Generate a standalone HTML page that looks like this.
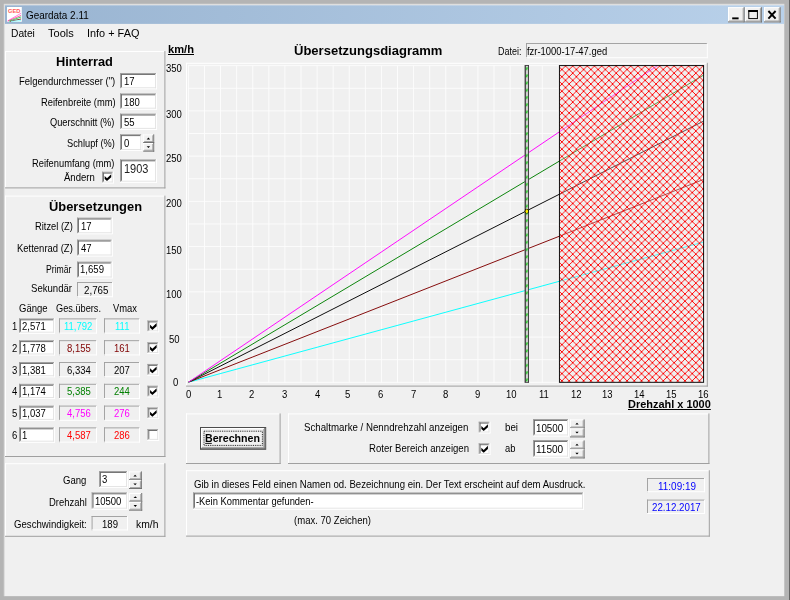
<!DOCTYPE html>
<html><head><meta charset="utf-8"><title>Geardata 2.11</title>
<style>
html,body{margin:0;padding:0;}
body{width:790px;height:600px;position:relative;overflow:hidden;background:#b4b4b4;font-family:"Liberation Sans",sans-serif;}
.tx{position:absolute;left:0;top:0;width:790px;height:600px;will-change:transform;opacity:0.999;}
.t{position:absolute;white-space:pre;line-height:1;color:#000;transform-origin:0 0;font-family:"Liberation Sans",sans-serif;}
</style></head><body>
<svg width="790" height="600" viewBox="0 0 790 600" style="position:absolute;left:0;top:0"><rect x="0.00" y="0.00" width="790.00" height="600.00" fill="#b4b4b4"/>
<rect x="789.00" y="0.00" width="1.00" height="600.00" fill="#646464"/>
<rect x="3.80" y="3.80" width="780.60" height="592.40" fill="#dedede"/>
<rect x="5.00" y="5.00" width="779.00" height="591.00" fill="#f0f0f0"/>
<defs><linearGradient id="tg" x1="0" x2="1" y1="0" y2="0"><stop offset="0" stop-color="#99b4d1"/><stop offset="1" stop-color="#b9d1ea"/></linearGradient><pattern id="dc" width="7.24" height="7.24" patternUnits="userSpaceOnUse" x="561.9" y="69.5"><g fill="#ff0000"><rect x="0.000" y="0.000" width="0.905" height="0.905"/><rect x="6.335" y="0.000" width="0.905" height="0.905"/><rect x="0.905" y="0.905" width="0.905" height="0.905"/><rect x="5.430" y="0.905" width="0.905" height="0.905"/><rect x="1.810" y="1.810" width="0.905" height="0.905"/><rect x="4.525" y="1.810" width="0.905" height="0.905"/><rect x="2.715" y="2.715" width="0.905" height="0.905"/><rect x="3.620" y="2.715" width="0.905" height="0.905"/><rect x="3.620" y="3.620" width="0.905" height="0.905"/><rect x="2.715" y="3.620" width="0.905" height="0.905"/><rect x="4.525" y="4.525" width="0.905" height="0.905"/><rect x="1.810" y="4.525" width="0.905" height="0.905"/><rect x="5.430" y="5.430" width="0.905" height="0.905"/><rect x="0.905" y="5.430" width="0.905" height="0.905"/><rect x="6.335" y="6.335" width="0.905" height="0.905"/><rect x="0.000" y="6.335" width="0.905" height="0.905"/></g></pattern><pattern id="gd" width="4" height="7.24" patternUnits="userSpaceOnUse" x="525.4" y="66"><path d="M0.8,4.0 L2.1,1.2" stroke="#00c800" stroke-width="1.3" fill="none"/></pattern><clipPath id="plot"><rect x="188" y="65.6" width="516" height="317"/></clipPath></defs>
<rect x="5.00" y="5.30" width="779.00" height="18.60" fill="url(#tg)"/>
<rect x="7.00" y="7.00" width="14.80" height="14.80" fill="#fff"/>
<text x="8" y="13.2" font-family="Liberation Sans" font-weight="bold" font-size="6.2" fill="#ff5a5a" textLength="12.4" lengthAdjust="spacingAndGlyphs">GED</text>
<path d="M7.5,21 L21,13.3" stroke="#ff80e0" stroke-width="1.0"/><path d="M8,21 L21,15.5" stroke="#ff3090" stroke-width="0.8"/><path d="M9,21.2 L21,17" stroke="#40e060" stroke-width="1.0"/><path d="M10,21.3 L21,19" stroke="#703030" stroke-width="0.9"/><path d="M11,21.4 L21,20.6" stroke="#80ffff" stroke-width="0.9"/>
<rect x="728.00" y="7.20" width="16.60" height="15.20" fill="#f0f0f0"/>
<rect x="728.00" y="7.20" width="15.65" height="0.95" fill="#ffffff"/>
<rect x="728.00" y="7.20" width="0.95" height="14.25" fill="#ffffff"/>
<rect x="728.00" y="21.45" width="16.60" height="0.95" fill="#696969"/>
<rect x="743.65" y="7.20" width="0.95" height="15.20" fill="#696969"/>
<rect x="728.95" y="20.50" width="14.70" height="0.95" fill="#a0a0a0"/>
<rect x="742.70" y="8.15" width="0.95" height="13.30" fill="#a0a0a0"/>
<rect x="732.20" y="17.40" width="6.40" height="1.90" fill="#000"/>
<rect x="745.20" y="7.20" width="16.60" height="15.20" fill="#f0f0f0"/>
<rect x="745.20" y="7.20" width="15.65" height="0.95" fill="#ffffff"/>
<rect x="745.20" y="7.20" width="0.95" height="14.25" fill="#ffffff"/>
<rect x="745.20" y="21.45" width="16.60" height="0.95" fill="#696969"/>
<rect x="760.85" y="7.20" width="0.95" height="15.20" fill="#696969"/>
<rect x="746.15" y="20.50" width="14.70" height="0.95" fill="#a0a0a0"/>
<rect x="759.90" y="8.15" width="0.95" height="13.30" fill="#a0a0a0"/>
<rect x="748.80" y="10.60" width="8.6" height="8" fill="none" stroke="#000" stroke-width="0.95"/>
<rect x="748.30" y="10.10" width="9.60" height="1.90" fill="#000"/>
<rect x="764.00" y="7.20" width="16.60" height="15.20" fill="#f0f0f0"/>
<rect x="764.00" y="7.20" width="15.65" height="0.95" fill="#ffffff"/>
<rect x="764.00" y="7.20" width="0.95" height="14.25" fill="#ffffff"/>
<rect x="764.00" y="21.45" width="16.60" height="0.95" fill="#696969"/>
<rect x="779.65" y="7.20" width="0.95" height="15.20" fill="#696969"/>
<rect x="764.95" y="20.50" width="14.70" height="0.95" fill="#a0a0a0"/>
<rect x="778.70" y="8.15" width="0.95" height="13.30" fill="#a0a0a0"/>
<path d="M768.40,11 L775.60,18.6 M775.60,11 L768.40,18.6" stroke="#000" stroke-width="1.9"/>
<rect x="5.00" y="51.00" width="160.40" height="1.00" fill="#ffffff"/>
<rect x="5.00" y="51.00" width="1.00" height="137.40" fill="#ffffff"/>
<rect x="5.00" y="187.40" width="160.40" height="1.00" fill="#a0a0a0"/>
<rect x="164.40" y="51.00" width="1.00" height="137.40" fill="#a0a0a0"/>
<rect x="5.00" y="195.60" width="160.40" height="1.00" fill="#ffffff"/>
<rect x="5.00" y="195.60" width="1.00" height="261.40" fill="#ffffff"/>
<rect x="5.00" y="456.00" width="160.40" height="1.00" fill="#a0a0a0"/>
<rect x="164.40" y="195.60" width="1.00" height="261.40" fill="#a0a0a0"/>
<rect x="5.00" y="463.20" width="160.40" height="1.00" fill="#ffffff"/>
<rect x="5.00" y="463.20" width="1.00" height="73.60" fill="#ffffff"/>
<rect x="5.00" y="535.80" width="160.40" height="1.00" fill="#a0a0a0"/>
<rect x="164.40" y="463.20" width="1.00" height="73.60" fill="#a0a0a0"/>
<rect x="120.00" y="73.00" width="37.00" height="16.20" fill="#fff"/>
<rect x="120.00" y="88.25" width="37.00" height="0.95" fill="#ffffff"/>
<rect x="156.05" y="73.00" width="0.95" height="16.20" fill="#ffffff"/>
<rect x="120.95" y="87.30" width="35.10" height="0.95" fill="#e3e3e3"/>
<rect x="155.10" y="73.95" width="0.95" height="14.30" fill="#e3e3e3"/>
<rect x="120.00" y="73.00" width="36.05" height="0.95" fill="#a0a0a0"/>
<rect x="120.00" y="73.00" width="0.95" height="15.25" fill="#a0a0a0"/>
<rect x="120.95" y="73.95" width="34.15" height="0.95" fill="#696969"/>
<rect x="120.95" y="73.95" width="0.95" height="13.35" fill="#696969"/>
<rect x="120.00" y="93.40" width="37.00" height="16.20" fill="#fff"/>
<rect x="120.00" y="108.65" width="37.00" height="0.95" fill="#ffffff"/>
<rect x="156.05" y="93.40" width="0.95" height="16.20" fill="#ffffff"/>
<rect x="120.95" y="107.70" width="35.10" height="0.95" fill="#e3e3e3"/>
<rect x="155.10" y="94.35" width="0.95" height="14.30" fill="#e3e3e3"/>
<rect x="120.00" y="93.40" width="36.05" height="0.95" fill="#a0a0a0"/>
<rect x="120.00" y="93.40" width="0.95" height="15.25" fill="#a0a0a0"/>
<rect x="120.95" y="94.35" width="34.15" height="0.95" fill="#696969"/>
<rect x="120.95" y="94.35" width="0.95" height="13.35" fill="#696969"/>
<rect x="120.00" y="113.60" width="37.00" height="16.20" fill="#fff"/>
<rect x="120.00" y="128.85" width="37.00" height="0.95" fill="#ffffff"/>
<rect x="156.05" y="113.60" width="0.95" height="16.20" fill="#ffffff"/>
<rect x="120.95" y="127.90" width="35.10" height="0.95" fill="#e3e3e3"/>
<rect x="155.10" y="114.55" width="0.95" height="14.30" fill="#e3e3e3"/>
<rect x="120.00" y="113.60" width="36.05" height="0.95" fill="#a0a0a0"/>
<rect x="120.00" y="113.60" width="0.95" height="15.25" fill="#a0a0a0"/>
<rect x="120.95" y="114.55" width="34.15" height="0.95" fill="#696969"/>
<rect x="120.95" y="114.55" width="0.95" height="13.35" fill="#696969"/>
<rect x="120.00" y="134.20" width="22.20" height="16.80" fill="#fff"/>
<rect x="120.00" y="150.05" width="22.20" height="0.95" fill="#ffffff"/>
<rect x="141.25" y="134.20" width="0.95" height="16.80" fill="#ffffff"/>
<rect x="120.95" y="149.10" width="20.30" height="0.95" fill="#e3e3e3"/>
<rect x="140.30" y="135.15" width="0.95" height="14.90" fill="#e3e3e3"/>
<rect x="120.00" y="134.20" width="21.25" height="0.95" fill="#a0a0a0"/>
<rect x="120.00" y="134.20" width="0.95" height="15.85" fill="#a0a0a0"/>
<rect x="120.95" y="135.15" width="19.35" height="0.95" fill="#696969"/>
<rect x="120.95" y="135.15" width="0.95" height="13.95" fill="#696969"/>
<rect x="143.20" y="134.40" width="11.00" height="8.60" fill="#f0f0f0"/>
<rect x="143.20" y="134.40" width="10.05" height="0.95" fill="#ffffff"/>
<rect x="143.20" y="134.40" width="0.95" height="7.65" fill="#ffffff"/>
<rect x="143.20" y="142.05" width="11.00" height="0.95" fill="#696969"/>
<rect x="153.25" y="134.40" width="0.95" height="8.60" fill="#696969"/>
<rect x="144.15" y="141.10" width="9.10" height="0.95" fill="#a0a0a0"/>
<rect x="152.30" y="135.35" width="0.95" height="6.70" fill="#a0a0a0"/>
<rect x="143.20" y="143.00" width="11.00" height="8.60" fill="#f0f0f0"/>
<rect x="143.20" y="143.00" width="10.05" height="0.95" fill="#ffffff"/>
<rect x="143.20" y="143.00" width="0.95" height="7.65" fill="#ffffff"/>
<rect x="143.20" y="150.65" width="11.00" height="0.95" fill="#696969"/>
<rect x="153.25" y="143.00" width="0.95" height="8.60" fill="#696969"/>
<rect x="144.15" y="149.70" width="9.10" height="0.95" fill="#a0a0a0"/>
<rect x="152.30" y="143.95" width="0.95" height="6.70" fill="#a0a0a0"/>
<path d="M146.70,139.40 L148.40,137.60 L150.10,139.40Z" fill="#000"/>
<path d="M146.70,146.20 L148.40,148.00 L150.10,146.20Z" fill="#000"/>
<rect x="120.00" y="159.40" width="37.00" height="23.20" fill="#fff"/>
<rect x="120.00" y="181.65" width="37.00" height="0.95" fill="#ffffff"/>
<rect x="156.05" y="159.40" width="0.95" height="23.20" fill="#ffffff"/>
<rect x="120.95" y="180.70" width="35.10" height="0.95" fill="#e3e3e3"/>
<rect x="155.10" y="160.35" width="0.95" height="21.30" fill="#e3e3e3"/>
<rect x="120.00" y="159.40" width="36.05" height="0.95" fill="#a0a0a0"/>
<rect x="120.00" y="159.40" width="0.95" height="22.25" fill="#a0a0a0"/>
<rect x="120.95" y="160.35" width="34.15" height="0.95" fill="#696969"/>
<rect x="120.95" y="160.35" width="0.95" height="20.35" fill="#696969"/>
<rect x="102.00" y="171.70" width="11.70" height="11.70" fill="#fff"/>
<rect x="102.00" y="182.45" width="11.70" height="0.95" fill="#ffffff"/>
<rect x="112.75" y="171.70" width="0.95" height="11.70" fill="#ffffff"/>
<rect x="102.95" y="181.50" width="9.80" height="0.95" fill="#e3e3e3"/>
<rect x="111.80" y="172.65" width="0.95" height="9.80" fill="#e3e3e3"/>
<rect x="102.00" y="171.70" width="10.75" height="0.95" fill="#a0a0a0"/>
<rect x="102.00" y="171.70" width="0.95" height="10.75" fill="#a0a0a0"/>
<rect x="102.95" y="172.65" width="8.85" height="0.95" fill="#696969"/>
<rect x="102.95" y="172.65" width="0.95" height="8.85" fill="#696969"/>
<polygon points="104.66,176.07 107.00,178.32 111.23,174.27 111.23,177.33 107.00,181.11 104.66,179.04" fill="#000"/>
<rect x="77.00" y="217.60" width="35.60" height="16.60" fill="#fff"/>
<rect x="77.00" y="233.25" width="35.60" height="0.95" fill="#ffffff"/>
<rect x="111.65" y="217.60" width="0.95" height="16.60" fill="#ffffff"/>
<rect x="77.95" y="232.30" width="33.70" height="0.95" fill="#e3e3e3"/>
<rect x="110.70" y="218.55" width="0.95" height="14.70" fill="#e3e3e3"/>
<rect x="77.00" y="217.60" width="34.65" height="0.95" fill="#a0a0a0"/>
<rect x="77.00" y="217.60" width="0.95" height="15.65" fill="#a0a0a0"/>
<rect x="77.95" y="218.55" width="32.75" height="0.95" fill="#696969"/>
<rect x="77.95" y="218.55" width="0.95" height="13.75" fill="#696969"/>
<rect x="77.00" y="239.60" width="35.60" height="16.80" fill="#fff"/>
<rect x="77.00" y="255.45" width="35.60" height="0.95" fill="#ffffff"/>
<rect x="111.65" y="239.60" width="0.95" height="16.80" fill="#ffffff"/>
<rect x="77.95" y="254.50" width="33.70" height="0.95" fill="#e3e3e3"/>
<rect x="110.70" y="240.55" width="0.95" height="14.90" fill="#e3e3e3"/>
<rect x="77.00" y="239.60" width="34.65" height="0.95" fill="#a0a0a0"/>
<rect x="77.00" y="239.60" width="0.95" height="15.85" fill="#a0a0a0"/>
<rect x="77.95" y="240.55" width="32.75" height="0.95" fill="#696969"/>
<rect x="77.95" y="240.55" width="0.95" height="13.95" fill="#696969"/>
<rect x="77.00" y="261.60" width="35.60" height="16.80" fill="#fff"/>
<rect x="77.00" y="277.45" width="35.60" height="0.95" fill="#ffffff"/>
<rect x="111.65" y="261.60" width="0.95" height="16.80" fill="#ffffff"/>
<rect x="77.95" y="276.50" width="33.70" height="0.95" fill="#e3e3e3"/>
<rect x="110.70" y="262.55" width="0.95" height="14.90" fill="#e3e3e3"/>
<rect x="77.00" y="261.60" width="34.65" height="0.95" fill="#a0a0a0"/>
<rect x="77.00" y="261.60" width="0.95" height="15.85" fill="#a0a0a0"/>
<rect x="77.95" y="262.55" width="32.75" height="0.95" fill="#696969"/>
<rect x="77.95" y="262.55" width="0.95" height="13.95" fill="#696969"/>
<rect x="77.00" y="282.00" width="36.00" height="0.95" fill="#a0a0a0"/>
<rect x="77.00" y="282.00" width="0.95" height="15.20" fill="#a0a0a0"/>
<rect x="77.00" y="296.25" width="36.00" height="0.95" fill="#ffffff"/>
<rect x="112.05" y="282.00" width="0.95" height="15.20" fill="#ffffff"/>
<rect x="19.00" y="318.40" width="36.00" height="15.20" fill="#fff"/>
<rect x="19.00" y="332.65" width="36.00" height="0.95" fill="#ffffff"/>
<rect x="54.05" y="318.40" width="0.95" height="15.20" fill="#ffffff"/>
<rect x="19.95" y="331.70" width="34.10" height="0.95" fill="#e3e3e3"/>
<rect x="53.10" y="319.35" width="0.95" height="13.30" fill="#e3e3e3"/>
<rect x="19.00" y="318.40" width="35.05" height="0.95" fill="#a0a0a0"/>
<rect x="19.00" y="318.40" width="0.95" height="14.25" fill="#a0a0a0"/>
<rect x="19.95" y="319.35" width="33.15" height="0.95" fill="#696969"/>
<rect x="19.95" y="319.35" width="0.95" height="12.35" fill="#696969"/>
<rect x="59.00" y="318.40" width="38.00" height="0.95" fill="#a0a0a0"/>
<rect x="59.00" y="318.40" width="0.95" height="15.20" fill="#a0a0a0"/>
<rect x="59.00" y="332.65" width="38.00" height="0.95" fill="#ffffff"/>
<rect x="96.05" y="318.40" width="0.95" height="15.20" fill="#ffffff"/>
<rect x="104.00" y="318.40" width="36.00" height="0.95" fill="#a0a0a0"/>
<rect x="104.00" y="318.40" width="0.95" height="15.20" fill="#a0a0a0"/>
<rect x="104.00" y="332.65" width="36.00" height="0.95" fill="#ffffff"/>
<rect x="139.05" y="318.40" width="0.95" height="15.20" fill="#ffffff"/>
<rect x="147.40" y="320.50" width="11.70" height="11.70" fill="#fff"/>
<rect x="147.40" y="331.25" width="11.70" height="0.95" fill="#ffffff"/>
<rect x="158.15" y="320.50" width="0.95" height="11.70" fill="#ffffff"/>
<rect x="148.35" y="330.30" width="9.80" height="0.95" fill="#e3e3e3"/>
<rect x="157.20" y="321.45" width="0.95" height="9.80" fill="#e3e3e3"/>
<rect x="147.40" y="320.50" width="10.75" height="0.95" fill="#a0a0a0"/>
<rect x="147.40" y="320.50" width="0.95" height="10.75" fill="#a0a0a0"/>
<rect x="148.35" y="321.45" width="8.85" height="0.95" fill="#696969"/>
<rect x="148.35" y="321.45" width="0.95" height="8.85" fill="#696969"/>
<polygon points="150.06,324.87 152.40,327.12 156.63,323.07 156.63,326.13 152.40,329.91 150.06,327.84" fill="#000"/>
<rect x="19.00" y="340.20" width="36.00" height="15.20" fill="#fff"/>
<rect x="19.00" y="354.45" width="36.00" height="0.95" fill="#ffffff"/>
<rect x="54.05" y="340.20" width="0.95" height="15.20" fill="#ffffff"/>
<rect x="19.95" y="353.50" width="34.10" height="0.95" fill="#e3e3e3"/>
<rect x="53.10" y="341.15" width="0.95" height="13.30" fill="#e3e3e3"/>
<rect x="19.00" y="340.20" width="35.05" height="0.95" fill="#a0a0a0"/>
<rect x="19.00" y="340.20" width="0.95" height="14.25" fill="#a0a0a0"/>
<rect x="19.95" y="341.15" width="33.15" height="0.95" fill="#696969"/>
<rect x="19.95" y="341.15" width="0.95" height="12.35" fill="#696969"/>
<rect x="59.00" y="340.20" width="38.00" height="0.95" fill="#a0a0a0"/>
<rect x="59.00" y="340.20" width="0.95" height="15.20" fill="#a0a0a0"/>
<rect x="59.00" y="354.45" width="38.00" height="0.95" fill="#ffffff"/>
<rect x="96.05" y="340.20" width="0.95" height="15.20" fill="#ffffff"/>
<rect x="104.00" y="340.20" width="36.00" height="0.95" fill="#a0a0a0"/>
<rect x="104.00" y="340.20" width="0.95" height="15.20" fill="#a0a0a0"/>
<rect x="104.00" y="354.45" width="36.00" height="0.95" fill="#ffffff"/>
<rect x="139.05" y="340.20" width="0.95" height="15.20" fill="#ffffff"/>
<rect x="147.40" y="342.22" width="11.70" height="11.70" fill="#fff"/>
<rect x="147.40" y="352.97" width="11.70" height="0.95" fill="#ffffff"/>
<rect x="158.15" y="342.22" width="0.95" height="11.70" fill="#ffffff"/>
<rect x="148.35" y="352.02" width="9.80" height="0.95" fill="#e3e3e3"/>
<rect x="157.20" y="343.17" width="0.95" height="9.80" fill="#e3e3e3"/>
<rect x="147.40" y="342.22" width="10.75" height="0.95" fill="#a0a0a0"/>
<rect x="147.40" y="342.22" width="0.95" height="10.75" fill="#a0a0a0"/>
<rect x="148.35" y="343.17" width="8.85" height="0.95" fill="#696969"/>
<rect x="148.35" y="343.17" width="0.95" height="8.85" fill="#696969"/>
<polygon points="150.06,346.59 152.40,348.84 156.63,344.79 156.63,347.85 152.40,351.63 150.06,349.56" fill="#000"/>
<rect x="19.00" y="362.00" width="36.00" height="15.20" fill="#fff"/>
<rect x="19.00" y="376.25" width="36.00" height="0.95" fill="#ffffff"/>
<rect x="54.05" y="362.00" width="0.95" height="15.20" fill="#ffffff"/>
<rect x="19.95" y="375.30" width="34.10" height="0.95" fill="#e3e3e3"/>
<rect x="53.10" y="362.95" width="0.95" height="13.30" fill="#e3e3e3"/>
<rect x="19.00" y="362.00" width="35.05" height="0.95" fill="#a0a0a0"/>
<rect x="19.00" y="362.00" width="0.95" height="14.25" fill="#a0a0a0"/>
<rect x="19.95" y="362.95" width="33.15" height="0.95" fill="#696969"/>
<rect x="19.95" y="362.95" width="0.95" height="12.35" fill="#696969"/>
<rect x="59.00" y="362.00" width="38.00" height="0.95" fill="#a0a0a0"/>
<rect x="59.00" y="362.00" width="0.95" height="15.20" fill="#a0a0a0"/>
<rect x="59.00" y="376.25" width="38.00" height="0.95" fill="#ffffff"/>
<rect x="96.05" y="362.00" width="0.95" height="15.20" fill="#ffffff"/>
<rect x="104.00" y="362.00" width="36.00" height="0.95" fill="#a0a0a0"/>
<rect x="104.00" y="362.00" width="0.95" height="15.20" fill="#a0a0a0"/>
<rect x="104.00" y="376.25" width="36.00" height="0.95" fill="#ffffff"/>
<rect x="139.05" y="362.00" width="0.95" height="15.20" fill="#ffffff"/>
<rect x="147.40" y="363.94" width="11.70" height="11.70" fill="#fff"/>
<rect x="147.40" y="374.69" width="11.70" height="0.95" fill="#ffffff"/>
<rect x="158.15" y="363.94" width="0.95" height="11.70" fill="#ffffff"/>
<rect x="148.35" y="373.74" width="9.80" height="0.95" fill="#e3e3e3"/>
<rect x="157.20" y="364.89" width="0.95" height="9.80" fill="#e3e3e3"/>
<rect x="147.40" y="363.94" width="10.75" height="0.95" fill="#a0a0a0"/>
<rect x="147.40" y="363.94" width="0.95" height="10.75" fill="#a0a0a0"/>
<rect x="148.35" y="364.89" width="8.85" height="0.95" fill="#696969"/>
<rect x="148.35" y="364.89" width="0.95" height="8.85" fill="#696969"/>
<polygon points="150.06,368.31 152.40,370.56 156.63,366.51 156.63,369.57 152.40,373.35 150.06,371.28" fill="#000"/>
<rect x="19.00" y="383.80" width="36.00" height="15.20" fill="#fff"/>
<rect x="19.00" y="398.05" width="36.00" height="0.95" fill="#ffffff"/>
<rect x="54.05" y="383.80" width="0.95" height="15.20" fill="#ffffff"/>
<rect x="19.95" y="397.10" width="34.10" height="0.95" fill="#e3e3e3"/>
<rect x="53.10" y="384.75" width="0.95" height="13.30" fill="#e3e3e3"/>
<rect x="19.00" y="383.80" width="35.05" height="0.95" fill="#a0a0a0"/>
<rect x="19.00" y="383.80" width="0.95" height="14.25" fill="#a0a0a0"/>
<rect x="19.95" y="384.75" width="33.15" height="0.95" fill="#696969"/>
<rect x="19.95" y="384.75" width="0.95" height="12.35" fill="#696969"/>
<rect x="59.00" y="383.80" width="38.00" height="0.95" fill="#a0a0a0"/>
<rect x="59.00" y="383.80" width="0.95" height="15.20" fill="#a0a0a0"/>
<rect x="59.00" y="398.05" width="38.00" height="0.95" fill="#ffffff"/>
<rect x="96.05" y="383.80" width="0.95" height="15.20" fill="#ffffff"/>
<rect x="104.00" y="383.80" width="36.00" height="0.95" fill="#a0a0a0"/>
<rect x="104.00" y="383.80" width="0.95" height="15.20" fill="#a0a0a0"/>
<rect x="104.00" y="398.05" width="36.00" height="0.95" fill="#ffffff"/>
<rect x="139.05" y="383.80" width="0.95" height="15.20" fill="#ffffff"/>
<rect x="147.40" y="385.66" width="11.70" height="11.70" fill="#fff"/>
<rect x="147.40" y="396.41" width="11.70" height="0.95" fill="#ffffff"/>
<rect x="158.15" y="385.66" width="0.95" height="11.70" fill="#ffffff"/>
<rect x="148.35" y="395.46" width="9.80" height="0.95" fill="#e3e3e3"/>
<rect x="157.20" y="386.61" width="0.95" height="9.80" fill="#e3e3e3"/>
<rect x="147.40" y="385.66" width="10.75" height="0.95" fill="#a0a0a0"/>
<rect x="147.40" y="385.66" width="0.95" height="10.75" fill="#a0a0a0"/>
<rect x="148.35" y="386.61" width="8.85" height="0.95" fill="#696969"/>
<rect x="148.35" y="386.61" width="0.95" height="8.85" fill="#696969"/>
<polygon points="150.06,390.03 152.40,392.28 156.63,388.23 156.63,391.29 152.40,395.07 150.06,393.00" fill="#000"/>
<rect x="19.00" y="405.60" width="36.00" height="15.20" fill="#fff"/>
<rect x="19.00" y="419.85" width="36.00" height="0.95" fill="#ffffff"/>
<rect x="54.05" y="405.60" width="0.95" height="15.20" fill="#ffffff"/>
<rect x="19.95" y="418.90" width="34.10" height="0.95" fill="#e3e3e3"/>
<rect x="53.10" y="406.55" width="0.95" height="13.30" fill="#e3e3e3"/>
<rect x="19.00" y="405.60" width="35.05" height="0.95" fill="#a0a0a0"/>
<rect x="19.00" y="405.60" width="0.95" height="14.25" fill="#a0a0a0"/>
<rect x="19.95" y="406.55" width="33.15" height="0.95" fill="#696969"/>
<rect x="19.95" y="406.55" width="0.95" height="12.35" fill="#696969"/>
<rect x="59.00" y="405.60" width="38.00" height="0.95" fill="#a0a0a0"/>
<rect x="59.00" y="405.60" width="0.95" height="15.20" fill="#a0a0a0"/>
<rect x="59.00" y="419.85" width="38.00" height="0.95" fill="#ffffff"/>
<rect x="96.05" y="405.60" width="0.95" height="15.20" fill="#ffffff"/>
<rect x="104.00" y="405.60" width="36.00" height="0.95" fill="#a0a0a0"/>
<rect x="104.00" y="405.60" width="0.95" height="15.20" fill="#a0a0a0"/>
<rect x="104.00" y="419.85" width="36.00" height="0.95" fill="#ffffff"/>
<rect x="139.05" y="405.60" width="0.95" height="15.20" fill="#ffffff"/>
<rect x="147.40" y="407.38" width="11.70" height="11.70" fill="#fff"/>
<rect x="147.40" y="418.13" width="11.70" height="0.95" fill="#ffffff"/>
<rect x="158.15" y="407.38" width="0.95" height="11.70" fill="#ffffff"/>
<rect x="148.35" y="417.18" width="9.80" height="0.95" fill="#e3e3e3"/>
<rect x="157.20" y="408.33" width="0.95" height="9.80" fill="#e3e3e3"/>
<rect x="147.40" y="407.38" width="10.75" height="0.95" fill="#a0a0a0"/>
<rect x="147.40" y="407.38" width="0.95" height="10.75" fill="#a0a0a0"/>
<rect x="148.35" y="408.33" width="8.85" height="0.95" fill="#696969"/>
<rect x="148.35" y="408.33" width="0.95" height="8.85" fill="#696969"/>
<polygon points="150.06,411.75 152.40,414.00 156.63,409.95 156.63,413.01 152.40,416.79 150.06,414.72" fill="#000"/>
<rect x="19.00" y="427.40" width="36.00" height="15.20" fill="#fff"/>
<rect x="19.00" y="441.65" width="36.00" height="0.95" fill="#ffffff"/>
<rect x="54.05" y="427.40" width="0.95" height="15.20" fill="#ffffff"/>
<rect x="19.95" y="440.70" width="34.10" height="0.95" fill="#e3e3e3"/>
<rect x="53.10" y="428.35" width="0.95" height="13.30" fill="#e3e3e3"/>
<rect x="19.00" y="427.40" width="35.05" height="0.95" fill="#a0a0a0"/>
<rect x="19.00" y="427.40" width="0.95" height="14.25" fill="#a0a0a0"/>
<rect x="19.95" y="428.35" width="33.15" height="0.95" fill="#696969"/>
<rect x="19.95" y="428.35" width="0.95" height="12.35" fill="#696969"/>
<rect x="59.00" y="427.40" width="38.00" height="0.95" fill="#a0a0a0"/>
<rect x="59.00" y="427.40" width="0.95" height="15.20" fill="#a0a0a0"/>
<rect x="59.00" y="441.65" width="38.00" height="0.95" fill="#ffffff"/>
<rect x="96.05" y="427.40" width="0.95" height="15.20" fill="#ffffff"/>
<rect x="104.00" y="427.40" width="36.00" height="0.95" fill="#a0a0a0"/>
<rect x="104.00" y="427.40" width="0.95" height="15.20" fill="#a0a0a0"/>
<rect x="104.00" y="441.65" width="36.00" height="0.95" fill="#ffffff"/>
<rect x="139.05" y="427.40" width="0.95" height="15.20" fill="#ffffff"/>
<rect x="147.40" y="429.10" width="11.70" height="11.70" fill="#fff"/>
<rect x="147.40" y="439.85" width="11.70" height="0.95" fill="#ffffff"/>
<rect x="158.15" y="429.10" width="0.95" height="11.70" fill="#ffffff"/>
<rect x="148.35" y="438.90" width="9.80" height="0.95" fill="#e3e3e3"/>
<rect x="157.20" y="430.05" width="0.95" height="9.80" fill="#e3e3e3"/>
<rect x="147.40" y="429.10" width="10.75" height="0.95" fill="#a0a0a0"/>
<rect x="147.40" y="429.10" width="0.95" height="10.75" fill="#a0a0a0"/>
<rect x="148.35" y="430.05" width="8.85" height="0.95" fill="#696969"/>
<rect x="148.35" y="430.05" width="0.95" height="8.85" fill="#696969"/>
<rect x="99.00" y="471.00" width="29.00" height="17.00" fill="#fff"/>
<rect x="99.00" y="487.05" width="29.00" height="0.95" fill="#ffffff"/>
<rect x="127.05" y="471.00" width="0.95" height="17.00" fill="#ffffff"/>
<rect x="99.95" y="486.10" width="27.10" height="0.95" fill="#e3e3e3"/>
<rect x="126.10" y="471.95" width="0.95" height="15.10" fill="#e3e3e3"/>
<rect x="99.00" y="471.00" width="28.05" height="0.95" fill="#a0a0a0"/>
<rect x="99.00" y="471.00" width="0.95" height="16.05" fill="#a0a0a0"/>
<rect x="99.95" y="471.95" width="26.15" height="0.95" fill="#696969"/>
<rect x="99.95" y="471.95" width="0.95" height="14.15" fill="#696969"/>
<rect x="129.00" y="471.40" width="12.80" height="8.80" fill="#f0f0f0"/>
<rect x="129.00" y="471.40" width="11.85" height="0.95" fill="#ffffff"/>
<rect x="129.00" y="471.40" width="0.95" height="7.85" fill="#ffffff"/>
<rect x="129.00" y="479.25" width="12.80" height="0.95" fill="#696969"/>
<rect x="140.85" y="471.40" width="0.95" height="8.80" fill="#696969"/>
<rect x="129.95" y="478.30" width="10.90" height="0.95" fill="#a0a0a0"/>
<rect x="139.90" y="472.35" width="0.95" height="6.90" fill="#a0a0a0"/>
<rect x="129.00" y="480.20" width="12.80" height="8.80" fill="#f0f0f0"/>
<rect x="129.00" y="480.20" width="11.85" height="0.95" fill="#ffffff"/>
<rect x="129.00" y="480.20" width="0.95" height="7.85" fill="#ffffff"/>
<rect x="129.00" y="488.05" width="12.80" height="0.95" fill="#696969"/>
<rect x="140.85" y="480.20" width="0.95" height="8.80" fill="#696969"/>
<rect x="129.95" y="487.10" width="10.90" height="0.95" fill="#a0a0a0"/>
<rect x="139.90" y="481.15" width="0.95" height="6.90" fill="#a0a0a0"/>
<path d="M133.40,476.50 L135.10,474.70 L136.80,476.50Z" fill="#000"/>
<path d="M133.40,483.50 L135.10,485.30 L136.80,483.50Z" fill="#000"/>
<rect x="91.60" y="492.40" width="36.40" height="17.20" fill="#fff"/>
<rect x="91.60" y="508.65" width="36.40" height="0.95" fill="#ffffff"/>
<rect x="127.05" y="492.40" width="0.95" height="17.20" fill="#ffffff"/>
<rect x="92.55" y="507.70" width="34.50" height="0.95" fill="#e3e3e3"/>
<rect x="126.10" y="493.35" width="0.95" height="15.30" fill="#e3e3e3"/>
<rect x="91.60" y="492.40" width="35.45" height="0.95" fill="#a0a0a0"/>
<rect x="91.60" y="492.40" width="0.95" height="16.25" fill="#a0a0a0"/>
<rect x="92.55" y="493.35" width="33.55" height="0.95" fill="#696969"/>
<rect x="92.55" y="493.35" width="0.95" height="14.35" fill="#696969"/>
<rect x="129.00" y="493.00" width="13.20" height="8.80" fill="#f0f0f0"/>
<rect x="129.00" y="493.00" width="12.25" height="0.95" fill="#ffffff"/>
<rect x="129.00" y="493.00" width="0.95" height="7.85" fill="#ffffff"/>
<rect x="129.00" y="500.85" width="13.20" height="0.95" fill="#696969"/>
<rect x="141.25" y="493.00" width="0.95" height="8.80" fill="#696969"/>
<rect x="129.95" y="499.90" width="11.30" height="0.95" fill="#a0a0a0"/>
<rect x="140.30" y="493.95" width="0.95" height="6.90" fill="#a0a0a0"/>
<rect x="129.00" y="501.80" width="13.20" height="8.80" fill="#f0f0f0"/>
<rect x="129.00" y="501.80" width="12.25" height="0.95" fill="#ffffff"/>
<rect x="129.00" y="501.80" width="0.95" height="7.85" fill="#ffffff"/>
<rect x="129.00" y="509.65" width="13.20" height="0.95" fill="#696969"/>
<rect x="141.25" y="501.80" width="0.95" height="8.80" fill="#696969"/>
<rect x="129.95" y="508.70" width="11.30" height="0.95" fill="#a0a0a0"/>
<rect x="140.30" y="502.75" width="0.95" height="6.90" fill="#a0a0a0"/>
<path d="M133.60,498.10 L135.30,496.30 L137.00,498.10Z" fill="#000"/>
<path d="M133.60,505.10 L135.30,506.90 L137.00,505.10Z" fill="#000"/>
<rect x="91.60" y="516.00" width="36.40" height="0.95" fill="#a0a0a0"/>
<rect x="91.60" y="516.00" width="0.95" height="14.40" fill="#a0a0a0"/>
<rect x="91.60" y="529.45" width="36.40" height="0.95" fill="#ffffff"/>
<rect x="127.05" y="516.00" width="0.95" height="14.40" fill="#ffffff"/>
<rect x="186.00" y="62.80" width="521.80" height="1.00" fill="#ffffff"/>
<rect x="186.00" y="62.80" width="1.00" height="323.80" fill="#ffffff"/>
<rect x="186.00" y="385.60" width="521.80" height="1.00" fill="#a0a0a0"/>
<rect x="706.80" y="62.80" width="1.00" height="323.80" fill="#a0a0a0"/>
<rect x="187.95" y="65.60" width="0.90" height="317.20" fill="#fdfdfd"/>
<rect x="204.04" y="65.60" width="0.90" height="317.20" fill="#fdfdfd"/>
<rect x="220.12" y="65.60" width="0.90" height="317.20" fill="#fdfdfd"/>
<rect x="236.21" y="65.60" width="0.90" height="317.20" fill="#fdfdfd"/>
<rect x="252.29" y="65.60" width="0.90" height="317.20" fill="#fdfdfd"/>
<rect x="268.38" y="65.60" width="0.90" height="317.20" fill="#fdfdfd"/>
<rect x="284.46" y="65.60" width="0.90" height="317.20" fill="#fdfdfd"/>
<rect x="300.55" y="65.60" width="0.90" height="317.20" fill="#fdfdfd"/>
<rect x="316.63" y="65.60" width="0.90" height="317.20" fill="#fdfdfd"/>
<rect x="332.72" y="65.60" width="0.90" height="317.20" fill="#fdfdfd"/>
<rect x="348.80" y="65.60" width="0.90" height="317.20" fill="#fdfdfd"/>
<rect x="364.89" y="65.60" width="0.90" height="317.20" fill="#fdfdfd"/>
<rect x="380.97" y="65.60" width="0.90" height="317.20" fill="#fdfdfd"/>
<rect x="397.06" y="65.60" width="0.90" height="317.20" fill="#fdfdfd"/>
<rect x="413.14" y="65.60" width="0.90" height="317.20" fill="#fdfdfd"/>
<rect x="429.23" y="65.60" width="0.90" height="317.20" fill="#fdfdfd"/>
<rect x="445.31" y="65.60" width="0.90" height="317.20" fill="#fdfdfd"/>
<rect x="461.40" y="65.60" width="0.90" height="317.20" fill="#fdfdfd"/>
<rect x="477.48" y="65.60" width="0.90" height="317.20" fill="#fdfdfd"/>
<rect x="493.56" y="65.60" width="0.90" height="317.20" fill="#fdfdfd"/>
<rect x="509.65" y="65.60" width="0.90" height="317.20" fill="#fdfdfd"/>
<rect x="525.74" y="65.60" width="0.90" height="317.20" fill="#fdfdfd"/>
<rect x="541.82" y="65.60" width="0.90" height="317.20" fill="#fdfdfd"/>
<rect x="557.90" y="65.60" width="0.90" height="317.20" fill="#fdfdfd"/>
<rect x="573.99" y="65.60" width="0.90" height="317.20" fill="#fdfdfd"/>
<rect x="590.07" y="65.60" width="0.90" height="317.20" fill="#fdfdfd"/>
<rect x="606.16" y="65.60" width="0.90" height="317.20" fill="#fdfdfd"/>
<rect x="622.25" y="65.60" width="0.90" height="317.20" fill="#fdfdfd"/>
<rect x="638.33" y="65.60" width="0.90" height="317.20" fill="#fdfdfd"/>
<rect x="654.41" y="65.60" width="0.90" height="317.20" fill="#fdfdfd"/>
<rect x="670.50" y="65.60" width="0.90" height="317.20" fill="#fdfdfd"/>
<rect x="686.59" y="65.60" width="0.90" height="317.20" fill="#fdfdfd"/>
<rect x="702.67" y="65.60" width="0.90" height="317.20" fill="#fdfdfd"/>
<rect x="188.00" y="381.85" width="516.00" height="0.90" fill="#fdfdfd"/>
<rect x="188.00" y="359.23" width="516.00" height="0.90" fill="#fdfdfd"/>
<rect x="188.00" y="336.62" width="516.00" height="0.90" fill="#fdfdfd"/>
<rect x="188.00" y="314.00" width="516.00" height="0.90" fill="#fdfdfd"/>
<rect x="188.00" y="291.38" width="516.00" height="0.90" fill="#fdfdfd"/>
<rect x="188.00" y="268.76" width="516.00" height="0.90" fill="#fdfdfd"/>
<rect x="188.00" y="246.15" width="516.00" height="0.90" fill="#fdfdfd"/>
<rect x="188.00" y="223.53" width="516.00" height="0.90" fill="#fdfdfd"/>
<rect x="188.00" y="200.91" width="516.00" height="0.90" fill="#fdfdfd"/>
<rect x="188.00" y="178.29" width="516.00" height="0.90" fill="#fdfdfd"/>
<rect x="188.00" y="155.68" width="516.00" height="0.90" fill="#fdfdfd"/>
<rect x="188.00" y="133.06" width="516.00" height="0.90" fill="#fdfdfd"/>
<rect x="188.00" y="110.44" width="516.00" height="0.90" fill="#fdfdfd"/>
<rect x="188.00" y="87.82" width="516.00" height="0.90" fill="#fdfdfd"/>
<rect x="188.00" y="65.21" width="516.00" height="0.90" fill="#fdfdfd"/>
<path d="M188.40,382.30 L703.12,242.14" stroke="#00ffff" stroke-width="0.95" fill="none" clip-path="url(#plot)"/>
<path d="M188.40,382.30 L703.12,179.63" stroke="#800000" stroke-width="0.95" fill="none" clip-path="url(#plot)"/>
<path d="M188.40,382.30 L703.12,121.36" stroke="#000000" stroke-width="0.95" fill="none" clip-path="url(#plot)"/>
<path d="M188.40,382.30 L703.12,75.38" stroke="#008000" stroke-width="0.95" fill="none" clip-path="url(#plot)"/>
<path d="M188.40,382.30 L703.12,34.79" stroke="#ff00ff" stroke-width="0.95" fill="none" clip-path="url(#plot)"/>
<rect x="524.70" y="65.60" width="4.30" height="316.70" fill="#cfcfcf"/>
<rect x="525.60" y="65.60" width="2.50" height="316.70" fill="url(#gd)"/>
<rect x="524.70" y="65.60" width="1.00" height="316.70" fill="#151515"/>
<rect x="528.00" y="65.60" width="1.00" height="316.70" fill="#454545"/>
<rect x="524.70" y="65.20" width="4.30" height="0.80" fill="#2a2a2a"/>
<rect x="524.70" y="381.90" width="4.30" height="0.80" fill="#2a2a2a"/>
<ellipse cx="526.8" cy="211.16" rx="2.1" ry="2.3" fill="#000"/>
<ellipse cx="526.8" cy="211.16" rx="1.3" ry="2.0" fill="#ffee00"/>
<rect x="559.40" y="65.60" width="144.20" height="316.70" fill="#f0f0f0" fill-opacity="0.3"/>
<rect x="559.40" y="65.6" width="144.20" height="316.70" fill="url(#dc)" stroke="#000" stroke-width="0.95"/>
<rect x="526.00" y="43.00" width="181.80" height="0.95" fill="#a0a0a0"/>
<rect x="526.00" y="43.00" width="0.95" height="15.20" fill="#a0a0a0"/>
<rect x="526.00" y="57.25" width="181.80" height="0.95" fill="#ffffff"/>
<rect x="706.85" y="43.00" width="0.95" height="15.20" fill="#ffffff"/>
<rect x="186.00" y="413.40" width="94.60" height="1.00" fill="#ffffff"/>
<rect x="186.00" y="413.40" width="1.00" height="50.60" fill="#ffffff"/>
<rect x="186.00" y="463.00" width="94.60" height="1.00" fill="#a0a0a0"/>
<rect x="279.60" y="413.40" width="1.00" height="50.60" fill="#a0a0a0"/>
<rect x="288.00" y="413.40" width="421.40" height="1.00" fill="#ffffff"/>
<rect x="288.00" y="413.40" width="1.00" height="50.60" fill="#ffffff"/>
<rect x="288.00" y="463.00" width="421.40" height="1.00" fill="#a0a0a0"/>
<rect x="708.40" y="413.40" width="1.00" height="50.60" fill="#a0a0a0"/>
<rect x="186.00" y="470.20" width="523.80" height="1.00" fill="#ffffff"/>
<rect x="186.00" y="470.20" width="1.00" height="66.40" fill="#ffffff"/>
<rect x="186.00" y="535.60" width="523.80" height="1.00" fill="#a0a0a0"/>
<rect x="708.80" y="470.20" width="1.00" height="66.40" fill="#a0a0a0"/>
<rect x="200.00" y="427.00" width="66.20" height="22.80" fill="#4c4c4c"/>
<rect x="201.00" y="428.00" width="64.20" height="20.80" fill="#f0f0f0"/>
<rect x="201.00" y="428.00" width="63.25" height="0.95" fill="#ffffff"/>
<rect x="201.00" y="428.00" width="0.95" height="19.85" fill="#ffffff"/>
<rect x="201.00" y="447.85" width="64.20" height="0.95" fill="#696969"/>
<rect x="264.25" y="428.00" width="0.95" height="20.80" fill="#696969"/>
<rect x="201.95" y="446.90" width="62.30" height="0.95" fill="#a0a0a0"/>
<rect x="263.30" y="428.95" width="0.95" height="18.90" fill="#a0a0a0"/>
<rect x="204" y="431.2" width="58.4" height="14.2" fill="none" stroke="#000" stroke-width="0.9" stroke-dasharray="0.9,0.9"/>
<rect x="205.20" y="442.90" width="6.60" height="0.90" fill="#000"/>
<rect x="478.70" y="421.70" width="11.70" height="11.70" fill="#fff"/>
<rect x="478.70" y="432.45" width="11.70" height="0.95" fill="#ffffff"/>
<rect x="489.45" y="421.70" width="0.95" height="11.70" fill="#ffffff"/>
<rect x="479.65" y="431.50" width="9.80" height="0.95" fill="#e3e3e3"/>
<rect x="488.50" y="422.65" width="0.95" height="9.80" fill="#e3e3e3"/>
<rect x="478.70" y="421.70" width="10.75" height="0.95" fill="#a0a0a0"/>
<rect x="478.70" y="421.70" width="0.95" height="10.75" fill="#a0a0a0"/>
<rect x="479.65" y="422.65" width="8.85" height="0.95" fill="#696969"/>
<rect x="479.65" y="422.65" width="0.95" height="8.85" fill="#696969"/>
<polygon points="481.36,426.07 483.70,428.32 487.93,424.27 487.93,427.33 483.70,431.11 481.36,429.04" fill="#000"/>
<rect x="478.70" y="443.30" width="11.70" height="11.70" fill="#fff"/>
<rect x="478.70" y="454.05" width="11.70" height="0.95" fill="#ffffff"/>
<rect x="489.45" y="443.30" width="0.95" height="11.70" fill="#ffffff"/>
<rect x="479.65" y="453.10" width="9.80" height="0.95" fill="#e3e3e3"/>
<rect x="488.50" y="444.25" width="0.95" height="9.80" fill="#e3e3e3"/>
<rect x="478.70" y="443.30" width="10.75" height="0.95" fill="#a0a0a0"/>
<rect x="478.70" y="443.30" width="0.95" height="10.75" fill="#a0a0a0"/>
<rect x="479.65" y="444.25" width="8.85" height="0.95" fill="#696969"/>
<rect x="479.65" y="444.25" width="0.95" height="8.85" fill="#696969"/>
<polygon points="481.36,447.67 483.70,449.92 487.93,445.87 487.93,448.93 483.70,452.71 481.36,450.64" fill="#000"/>
<rect x="533.00" y="419.00" width="36.00" height="17.40" fill="#fff"/>
<rect x="533.00" y="435.45" width="36.00" height="0.95" fill="#ffffff"/>
<rect x="568.05" y="419.00" width="0.95" height="17.40" fill="#ffffff"/>
<rect x="533.95" y="434.50" width="34.10" height="0.95" fill="#e3e3e3"/>
<rect x="567.10" y="419.95" width="0.95" height="15.50" fill="#e3e3e3"/>
<rect x="533.00" y="419.00" width="35.05" height="0.95" fill="#a0a0a0"/>
<rect x="533.00" y="419.00" width="0.95" height="16.45" fill="#a0a0a0"/>
<rect x="533.95" y="419.95" width="33.15" height="0.95" fill="#696969"/>
<rect x="533.95" y="419.95" width="0.95" height="14.55" fill="#696969"/>
<rect x="570.00" y="419.40" width="14.60" height="9.00" fill="#f0f0f0"/>
<rect x="570.00" y="419.40" width="13.65" height="0.95" fill="#ffffff"/>
<rect x="570.00" y="419.40" width="0.95" height="8.05" fill="#ffffff"/>
<rect x="570.00" y="427.45" width="14.60" height="0.95" fill="#696969"/>
<rect x="583.65" y="419.40" width="0.95" height="9.00" fill="#696969"/>
<rect x="570.95" y="426.50" width="12.70" height="0.95" fill="#a0a0a0"/>
<rect x="582.70" y="420.35" width="0.95" height="7.10" fill="#a0a0a0"/>
<rect x="570.00" y="428.40" width="14.60" height="9.00" fill="#f0f0f0"/>
<rect x="570.00" y="428.40" width="13.65" height="0.95" fill="#ffffff"/>
<rect x="570.00" y="428.40" width="0.95" height="8.05" fill="#ffffff"/>
<rect x="570.00" y="436.45" width="14.60" height="0.95" fill="#696969"/>
<rect x="583.65" y="428.40" width="0.95" height="9.00" fill="#696969"/>
<rect x="570.95" y="435.50" width="12.70" height="0.95" fill="#a0a0a0"/>
<rect x="582.70" y="429.35" width="0.95" height="7.10" fill="#a0a0a0"/>
<path d="M575.30,424.60 L577.00,422.80 L578.70,424.60Z" fill="#000"/>
<path d="M575.30,431.80 L577.00,433.60 L578.70,431.80Z" fill="#000"/>
<rect x="533.00" y="440.00" width="36.00" height="17.60" fill="#fff"/>
<rect x="533.00" y="456.65" width="36.00" height="0.95" fill="#ffffff"/>
<rect x="568.05" y="440.00" width="0.95" height="17.60" fill="#ffffff"/>
<rect x="533.95" y="455.70" width="34.10" height="0.95" fill="#e3e3e3"/>
<rect x="567.10" y="440.95" width="0.95" height="15.70" fill="#e3e3e3"/>
<rect x="533.00" y="440.00" width="35.05" height="0.95" fill="#a0a0a0"/>
<rect x="533.00" y="440.00" width="0.95" height="16.65" fill="#a0a0a0"/>
<rect x="533.95" y="440.95" width="33.15" height="0.95" fill="#696969"/>
<rect x="533.95" y="440.95" width="0.95" height="14.75" fill="#696969"/>
<rect x="570.00" y="440.40" width="14.60" height="9.00" fill="#f0f0f0"/>
<rect x="570.00" y="440.40" width="13.65" height="0.95" fill="#ffffff"/>
<rect x="570.00" y="440.40" width="0.95" height="8.05" fill="#ffffff"/>
<rect x="570.00" y="448.45" width="14.60" height="0.95" fill="#696969"/>
<rect x="583.65" y="440.40" width="0.95" height="9.00" fill="#696969"/>
<rect x="570.95" y="447.50" width="12.70" height="0.95" fill="#a0a0a0"/>
<rect x="582.70" y="441.35" width="0.95" height="7.10" fill="#a0a0a0"/>
<rect x="570.00" y="449.40" width="14.60" height="9.00" fill="#f0f0f0"/>
<rect x="570.00" y="449.40" width="13.65" height="0.95" fill="#ffffff"/>
<rect x="570.00" y="449.40" width="0.95" height="8.05" fill="#ffffff"/>
<rect x="570.00" y="457.45" width="14.60" height="0.95" fill="#696969"/>
<rect x="583.65" y="449.40" width="0.95" height="9.00" fill="#696969"/>
<rect x="570.95" y="456.50" width="12.70" height="0.95" fill="#a0a0a0"/>
<rect x="582.70" y="450.35" width="0.95" height="7.10" fill="#a0a0a0"/>
<path d="M575.30,445.60 L577.00,443.80 L578.70,445.60Z" fill="#000"/>
<path d="M575.30,452.80 L577.00,454.60 L578.70,452.80Z" fill="#000"/>
<rect x="193.00" y="492.40" width="391.00" height="17.20" fill="#fff"/>
<rect x="193.00" y="508.65" width="391.00" height="0.95" fill="#ffffff"/>
<rect x="583.05" y="492.40" width="0.95" height="17.20" fill="#ffffff"/>
<rect x="193.95" y="507.70" width="389.10" height="0.95" fill="#e3e3e3"/>
<rect x="582.10" y="493.35" width="0.95" height="15.30" fill="#e3e3e3"/>
<rect x="193.00" y="492.40" width="390.05" height="0.95" fill="#a0a0a0"/>
<rect x="193.00" y="492.40" width="0.95" height="16.25" fill="#a0a0a0"/>
<rect x="193.95" y="493.35" width="388.15" height="0.95" fill="#696969"/>
<rect x="193.95" y="493.35" width="0.95" height="14.35" fill="#696969"/>
<rect x="647.00" y="478.00" width="58.00" height="0.95" fill="#a0a0a0"/>
<rect x="647.00" y="478.00" width="0.95" height="14.20" fill="#a0a0a0"/>
<rect x="647.00" y="491.25" width="58.00" height="0.95" fill="#ffffff"/>
<rect x="704.05" y="478.00" width="0.95" height="14.20" fill="#ffffff"/>
<rect x="647.00" y="499.60" width="58.00" height="0.95" fill="#a0a0a0"/>
<rect x="647.00" y="499.60" width="0.95" height="14.40" fill="#a0a0a0"/>
<rect x="647.00" y="513.05" width="58.00" height="0.95" fill="#ffffff"/>
<rect x="704.05" y="499.60" width="0.95" height="14.40" fill="#ffffff"/></svg>
<div class="tx">
<span class="t" style="left:25.70px;top:10.00px;font-size:10.6px;transform:scaleX(0.9365);">Geardata 2.11</span>
<span class="t" style="left:11.30px;top:28.00px;font-size:10.8px;transform:scaleX(0.9477);">Datei</span>
<span class="t" style="left:48.20px;top:28.00px;font-size:10.8px;transform:scaleX(1.0230);">Tools</span>
<span class="t" style="left:86.60px;top:28.00px;font-size:10.8px;transform:scaleX(1.0092);">Info + FAQ</span>
<span class="t" style="left:55.70px;top:56.00px;font-size:12.4px;transform:scaleX(1.0328);font-weight:bold;">Hinterrad</span>
<span class="t" style="left:19.40px;top:76.00px;font-size:10.7px;transform:scaleX(0.8879);">Felgendurchmesser (&quot;)</span>
<span class="t" style="left:41.00px;top:97.00px;font-size:10.7px;transform:scaleX(0.8722);">Reifenbreite (mm)</span>
<span class="t" style="left:50.00px;top:117.00px;font-size:10.7px;transform:scaleX(0.8673);">Querschnitt (%)</span>
<span class="t" style="left:66.60px;top:138.00px;font-size:10.7px;transform:scaleX(0.8652);">Schlupf (%)</span>
<span class="t" style="left:32.00px;top:158.00px;font-size:10.7px;transform:scaleX(0.8725);">Reifenumfang (mm)</span>
<span class="t" style="left:64.40px;top:172.00px;font-size:10.7px;transform:scaleX(0.8936);">Ändern</span>
<span class="t" style="left:124.00px;top:76.00px;font-size:10.7px;transform:scaleX(0.8900);">17</span>
<span class="t" style="left:124.00px;top:97.00px;font-size:10.7px;transform:scaleX(0.8900);">180</span>
<span class="t" style="left:124.00px;top:117.00px;font-size:10.7px;transform:scaleX(0.8900);">55</span>
<span class="t" style="left:124.00px;top:138.00px;font-size:10.7px;transform:scaleX(0.8900);">0</span>
<span class="t" style="left:123.80px;top:163.00px;font-size:12.2px;transform:scaleX(0.8995);color:#222;">1903</span>
<span class="t" style="left:48.60px;top:201.00px;font-size:12.3px;transform:scaleX(1.0470);font-weight:bold;">Übersetzungen</span>
<span class="t" style="left:34.60px;top:221.00px;font-size:10.7px;transform:scaleX(0.8721);">Ritzel (Z)</span>
<span class="t" style="left:16.60px;top:243.00px;font-size:10.7px;transform:scaleX(0.8862);">Kettenrad (Z)</span>
<span class="t" style="left:45.60px;top:264.00px;font-size:10.7px;transform:scaleX(0.8071);">Primär</span>
<span class="t" style="left:31.00px;top:283.00px;font-size:10.7px;transform:scaleX(0.8959);">Sekundär</span>
<span class="t" style="left:81.00px;top:221.00px;font-size:10.7px;transform:scaleX(0.8900);">17</span>
<span class="t" style="left:81.00px;top:243.00px;font-size:10.7px;transform:scaleX(0.8900);">47</span>
<span class="t" style="left:80.00px;top:264.00px;font-size:10.7px;transform:scaleX(0.8972);">1,659</span>
<span class="t" style="left:83.60px;top:285.00px;font-size:10.7px;transform:scaleX(0.9121);">2,765</span>
<span class="t" style="left:19.40px;top:303.00px;font-size:10.7px;transform:scaleX(0.8911);">Gänge</span>
<span class="t" style="left:55.60px;top:303.00px;font-size:10.7px;transform:scaleX(0.8607);">Ges.übers.</span>
<span class="t" style="left:113.00px;top:303.00px;font-size:10.7px;transform:scaleX(0.8782);">Vmax</span>
<span class="t" style="left:11.60px;top:321.00px;font-size:10.7px;transform:scaleX(0.8900);">1</span>
<span class="t" style="left:22.40px;top:321.00px;font-size:10.7px;transform:scaleX(0.8900);">2,571</span>
<span class="t" style="left:64.40px;top:321.00px;font-size:10.7px;transform:scaleX(0.8900);color:#00ffff;">11,792</span>
<span class="t" style="left:114.77px;top:321.00px;font-size:10.7px;transform:scaleX(0.8900);color:#00ffff;">111</span>
<span class="t" style="left:11.60px;top:343.00px;font-size:10.7px;transform:scaleX(0.8900);">2</span>
<span class="t" style="left:22.40px;top:343.00px;font-size:10.7px;transform:scaleX(0.8900);">1,778</span>
<span class="t" style="left:66.70px;top:343.00px;font-size:10.7px;transform:scaleX(0.8900);color:#800000;">8,155</span>
<span class="t" style="left:114.06px;top:343.00px;font-size:10.7px;transform:scaleX(0.8900);color:#800000;">161</span>
<span class="t" style="left:11.60px;top:365.00px;font-size:10.7px;transform:scaleX(0.8900);">3</span>
<span class="t" style="left:22.40px;top:365.00px;font-size:10.7px;transform:scaleX(0.8900);">1,381</span>
<span class="t" style="left:66.70px;top:365.00px;font-size:10.7px;transform:scaleX(0.8900);">6,334</span>
<span class="t" style="left:114.06px;top:365.00px;font-size:10.7px;transform:scaleX(0.8900);">207</span>
<span class="t" style="left:11.60px;top:386.00px;font-size:10.7px;transform:scaleX(0.8900);">4</span>
<span class="t" style="left:22.40px;top:386.00px;font-size:10.7px;transform:scaleX(0.8900);">1,174</span>
<span class="t" style="left:66.70px;top:386.00px;font-size:10.7px;transform:scaleX(0.8900);color:#008000;">5,385</span>
<span class="t" style="left:114.06px;top:386.00px;font-size:10.7px;transform:scaleX(0.8900);color:#008000;">244</span>
<span class="t" style="left:11.60px;top:408.00px;font-size:10.7px;transform:scaleX(0.8900);">5</span>
<span class="t" style="left:22.40px;top:408.00px;font-size:10.7px;transform:scaleX(0.8900);">1,037</span>
<span class="t" style="left:66.70px;top:408.00px;font-size:10.7px;transform:scaleX(0.8900);color:#ff00ff;">4,756</span>
<span class="t" style="left:114.06px;top:408.00px;font-size:10.7px;transform:scaleX(0.8900);color:#ff00ff;">276</span>
<span class="t" style="left:11.60px;top:430.00px;font-size:10.7px;transform:scaleX(0.8900);">6</span>
<span class="t" style="left:22.40px;top:430.00px;font-size:10.7px;transform:scaleX(0.8900);">1</span>
<span class="t" style="left:66.70px;top:430.00px;font-size:10.7px;transform:scaleX(0.8900);color:#ff0000;">4,587</span>
<span class="t" style="left:114.06px;top:430.00px;font-size:10.7px;transform:scaleX(0.8900);color:#ff0000;">286</span>
<span class="t" style="left:63.00px;top:475.00px;font-size:10.7px;transform:scaleX(0.8946);">Gang</span>
<span class="t" style="left:48.60px;top:497.00px;font-size:10.7px;transform:scaleX(0.8836);">Drehzahl</span>
<span class="t" style="left:13.60px;top:519.00px;font-size:10.7px;transform:scaleX(0.9010);">Geschwindigkeit:</span>
<span class="t" style="left:102.00px;top:474.00px;font-size:10.7px;transform:scaleX(0.8900);">3</span>
<span class="t" style="left:95.00px;top:496.00px;font-size:10.7px;transform:scaleX(0.8879);">10500</span>
<span class="t" style="left:102.00px;top:519.00px;font-size:10.7px;transform:scaleX(0.8967);">189</span>
<span class="t" style="left:135.60px;top:519.00px;font-size:10.7px;transform:scaleX(0.9667);">km/h</span>
<span class="t" style="left:167.60px;top:44.00px;font-size:10.6px;transform:scaleX(1.0512);font-weight:bold;text-decoration:underline;">km/h</span>
<span class="t" style="left:294.40px;top:45.00px;font-size:12.2px;transform:scaleX(1.0688);font-weight:bold;">Übersetzungsdiagramm</span>
<span class="t" style="left:497.60px;top:46.00px;font-size:10.7px;transform:scaleX(0.8381);">Datei:</span>
<span class="t" style="left:527.40px;top:46.00px;font-size:10.7px;transform:scaleX(0.8822);">fzr-1000-17-47.ged</span>
<span class="t" style="left:166.26px;top:63.00px;font-size:10.7px;transform:scaleX(0.8900);">350</span>
<span class="t" style="left:166.26px;top:109.00px;font-size:10.7px;transform:scaleX(0.8900);">300</span>
<span class="t" style="left:166.26px;top:153.00px;font-size:10.7px;transform:scaleX(0.8900);">250</span>
<span class="t" style="left:166.26px;top:198.00px;font-size:10.7px;transform:scaleX(0.8900);">200</span>
<span class="t" style="left:166.26px;top:245.00px;font-size:10.7px;transform:scaleX(0.8900);">150</span>
<span class="t" style="left:166.26px;top:289.00px;font-size:10.7px;transform:scaleX(0.8900);">100</span>
<span class="t" style="left:168.91px;top:334.00px;font-size:10.7px;transform:scaleX(0.8900);">50</span>
<span class="t" style="left:173.15px;top:377.00px;font-size:10.7px;transform:scaleX(0.8900);">0</span>
<span class="t" style="left:185.95px;top:389.00px;font-size:10.7px;transform:scaleX(0.8900);">0</span>
<span class="t" style="left:216.55px;top:389.00px;font-size:10.7px;transform:scaleX(0.8900);">1</span>
<span class="t" style="left:249.15px;top:389.00px;font-size:10.7px;transform:scaleX(0.8900);">2</span>
<span class="t" style="left:281.95px;top:389.00px;font-size:10.7px;transform:scaleX(0.8900);">3</span>
<span class="t" style="left:314.65px;top:389.00px;font-size:10.7px;transform:scaleX(0.8900);">4</span>
<span class="t" style="left:345.15px;top:389.00px;font-size:10.7px;transform:scaleX(0.8900);">5</span>
<span class="t" style="left:378.35px;top:389.00px;font-size:10.7px;transform:scaleX(0.8900);">6</span>
<span class="t" style="left:410.95px;top:389.00px;font-size:10.7px;transform:scaleX(0.8900);">7</span>
<span class="t" style="left:443.35px;top:389.00px;font-size:10.7px;transform:scaleX(0.8900);">8</span>
<span class="t" style="left:474.95px;top:389.00px;font-size:10.7px;transform:scaleX(0.8900);">9</span>
<span class="t" style="left:505.71px;top:389.00px;font-size:10.7px;transform:scaleX(0.8900);">10</span>
<span class="t" style="left:538.66px;top:389.00px;font-size:10.7px;transform:scaleX(0.8900);">11</span>
<span class="t" style="left:570.71px;top:389.00px;font-size:10.7px;transform:scaleX(0.8900);">12</span>
<span class="t" style="left:601.71px;top:389.00px;font-size:10.7px;transform:scaleX(0.8900);">13</span>
<span class="t" style="left:633.91px;top:389.00px;font-size:10.7px;transform:scaleX(0.8900);">14</span>
<span class="t" style="left:665.91px;top:389.00px;font-size:10.7px;transform:scaleX(0.8900);">15</span>
<span class="t" style="left:697.51px;top:389.00px;font-size:10.7px;transform:scaleX(0.8900);">16</span>
<span class="t" style="left:627.60px;top:399.00px;font-size:10.6px;transform:scaleX(1.0338);font-weight:bold;text-decoration:underline;">Drehzahl x 1000</span>
<span class="t" style="left:205.00px;top:433.00px;font-size:11.5px;transform:scaleX(0.9253);font-weight:bold;">Berechnen</span>
<span class="t" style="left:303.60px;top:422.00px;font-size:10.7px;transform:scaleX(0.9073);">Schaltmarke / Nenndrehzahl anzeigen</span>
<span class="t" style="left:368.60px;top:443.00px;font-size:10.7px;transform:scaleX(0.8952);">Roter Bereich anzeigen</span>
<span class="t" style="left:504.60px;top:422.00px;font-size:10.7px;transform:scaleX(0.9113);">bei</span>
<span class="t" style="left:504.60px;top:443.00px;font-size:10.7px;transform:scaleX(0.8746);">ab</span>
<span class="t" style="left:536.40px;top:423.00px;font-size:10.7px;transform:scaleX(0.9148);">10500</span>
<span class="t" style="left:536.40px;top:444.00px;font-size:10.7px;transform:scaleX(0.9400);">11500</span>
<span class="t" style="left:193.60px;top:479.00px;font-size:10.7px;transform:scaleX(0.8992);">Gib in dieses Feld einen Namen od. Bezeichnung ein. Der Text erscheint auf dem Ausdruck.</span>
<span class="t" style="left:196.40px;top:496.00px;font-size:10.7px;transform:scaleX(0.8759);">-Kein Kommentar gefunden-</span>
<span class="t" style="left:294.40px;top:515.00px;font-size:10.7px;transform:scaleX(0.8939);">(max. 70 Zeichen)</span>
<span class="t" style="left:657.60px;top:481.00px;font-size:10.7px;transform:scaleX(0.9311);color:#0000ff;">11:09:19</span>
<span class="t" style="left:651.60px;top:502.00px;font-size:10.7px;transform:scaleX(0.9121);color:#0000ff;">22.12.2017</span>
</div>
</body></html>
